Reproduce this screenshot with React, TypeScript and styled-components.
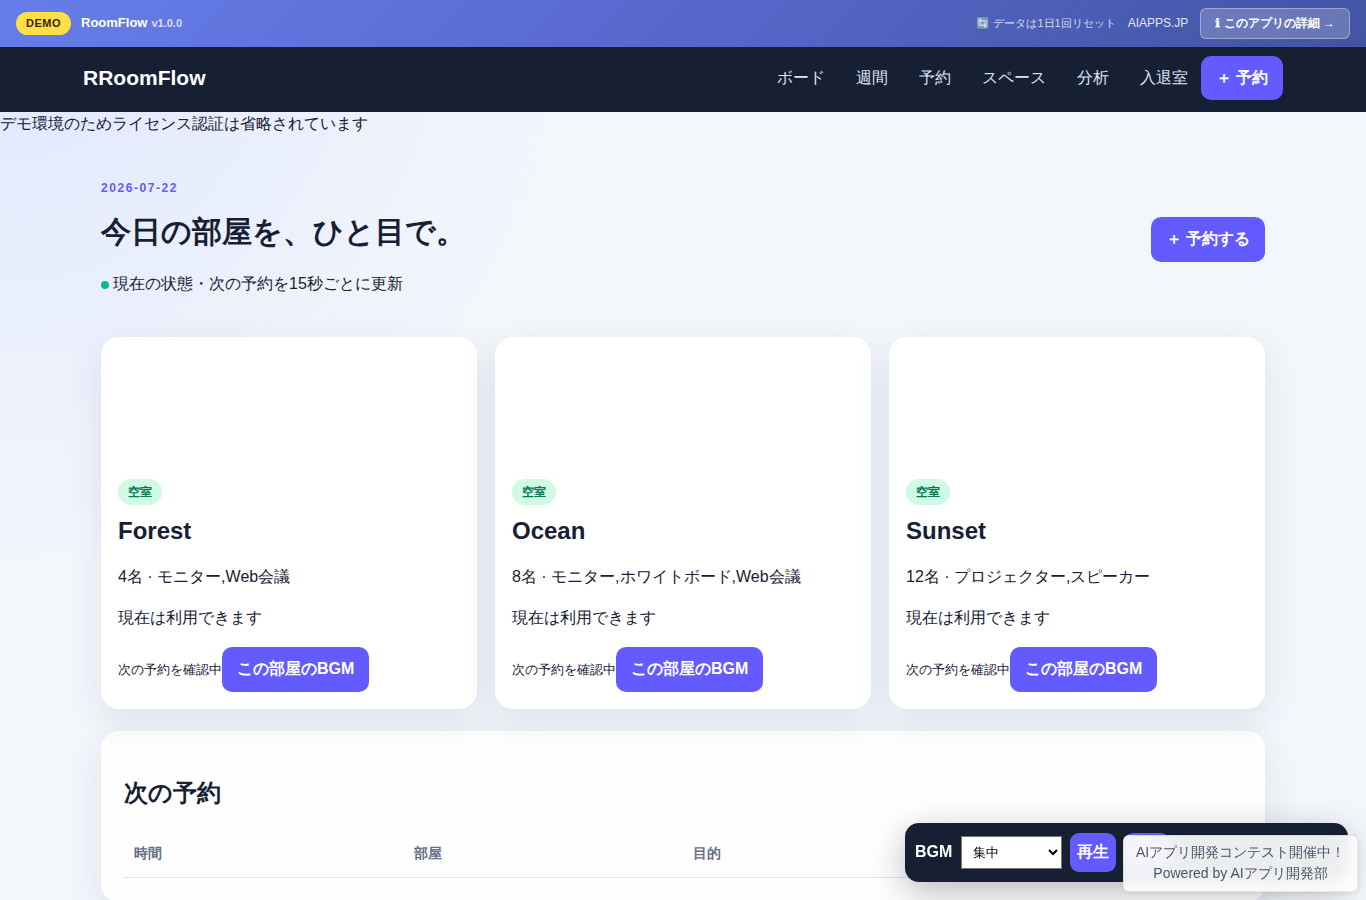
import React from "react";
import styled, { createGlobalStyle } from "styled-components";

const GlobalStyle = createGlobalStyle`
  * { box-sizing: border-box; }
  html { height: 100%; overflow: hidden; }
  body {
    margin: 0;
    height: 900px;
    overflow: hidden;
    color: #172033;
    font-family: "Liberation Sans", sans-serif;
    font-size: 16px;
    line-height: 24px;
    background: radial-gradient(circle at top left, #e0e7ff, transparent 35%) #f3f6fb;
  }
  button, select { font-family: inherit; }
`;

const DemoBar = styled.div`
  display: flex;
  align-items: center;
  justify-content: space-between;
  height: 47px;
  padding: 0 16px;
  color: #fff;
  background: linear-gradient(135deg, #667eea 0%, #5768cc 50%, #4254a2 100%);
`;

const BarGroup = styled.div<{ $gap: number }>`
  display: flex;
  align-items: center;
  gap: ${(p) => p.$gap}px;
`;

const DemoTag = styled.span`
  height: 23px;
  padding: 0 10px;
  border-radius: 20px;
  background: #fde047;
  color: #422006;
  font-size: 11px;
  line-height: 23px;
  font-weight: 700;
  letter-spacing: 0.5px;
`;

const AppName = styled.strong`
  font-size: 13px;
  line-height: 20px;
  padding-bottom: 1px;
`;

const Version = styled.span`
  font-size: 11px;
  font-weight: 700;
  opacity: 0.75;
  padding-bottom: 2px;
`;

const ResetNote = styled.span`
  font-size: 11px;
  opacity: 0.75;
  padding-bottom: 2px;
`;

const SiteLink = styled.a`
  font-size: 12px;
  opacity: 0.85;
  padding-bottom: 1px;
`;

const DetailLink = styled.a`
  height: 31px;
  padding: 0 14px;
  border: 1px solid rgba(255, 255, 255, 0.35);
  border-radius: 6px;
  background: rgba(255, 255, 255, 0.2);
  font-size: 12px;
  line-height: 28px;
  font-weight: 700;
`;

const InfoGlyph = styled.span`
  padding-right: 0.4px;
  font-family: "DejaVu Sans", sans-serif;
  -webkit-text-stroke: 0.5px currentColor;
`;

const Header = styled.header`
  display: flex;
  align-items: center;
  justify-content: space-between;
  height: 65px;
  padding: 0 83px;
  background: #172033;
`;

const Brand = styled.strong`
  color: #fff;
  font-size: 21px;
  padding-bottom: 3px;
`;

const Nav = styled.nav`
  display: flex;
  align-items: center;
  gap: 31px;
  padding-bottom: 3px;
`;

const NavLink = styled.a`
  color: #dbe4f5;
`;

const Button = styled.button<{ $height?: number; $compact?: boolean }>`
  flex: none;
  height: ${(p) => p.$height ?? 45}px;
  padding: 0 ${(p) => (p.$compact ? 7 : 15)}px 2px;
  border: 0;
  border-radius: ${(p) => (p.$compact ? 9 : 10)}px;
  background: #635bff;
  color: #fff;
  font-size: 16px;
  line-height: 24px;
  font-weight: 700;
  white-space: nowrap;
`;

const HeaderButton = styled(Button)`
  margin-left: -18px;
  padding-bottom: 0;
`;

const Notice = styled.div`
  height: 24px;
`;

const Main = styled.main`
  width: 1200px;
  margin: 0 auto;
  padding: 40px 18px 0;
`;

const Hero = styled.section`
  display: flex;
  align-items: flex-start;
  justify-content: space-between;
  height: 161px;
`;

const DateLabel = styled.div`
  color: #635bff;
  font-size: 12px;
  line-height: 24px;
  font-weight: 700;
  letter-spacing: 1.56px;
`;

const Title = styled.h1`
  margin: 10px 0 0;
  font-size: 30px;
  line-height: 44px;
  font-weight: 700;
`;

const LiveLine = styled.p`
  display: flex;
  align-items: center;
  gap: 4px;
  margin: 18px 0 0;
`;

const Dot = styled.i`
  width: 8px;
  height: 8px;
  margin-top: 2px;
  border-radius: 50%;
  background: #10b981;
`;

const HeroAction = styled.div`
  padding-top: 41px;
`;

const Rooms = styled.section`
  display: grid;
  grid-template-columns: repeat(3, 1fr);
  gap: 18px;
`;

const Card = styled.article`
  height: 372px;
  padding: 142px 17px 0;
  border-radius: 18px;
  background: #fff;
  box-shadow: 0 12px 35px rgba(37, 47, 96, 0.1);
`;

const Status = styled.span`
  display: block;
  width: 44px;
  height: 26px;
  border-radius: 20px;
  background: #d1fae5;
  color: #047857;
  font-size: 12px;
  line-height: 27px;
  font-weight: 700;
  text-align: center;
`;

const RoomName = styled.h2`
  margin: 10px 0 0;
  font-size: 24px;
  line-height: 32px;
`;

const RoomText = styled.p<{ $top: number }>`
  margin: ${(p) => p.$top}px 0 0;
`;

const CardFooter = styled.div`
  display: flex;
  align-items: center;
  margin-top: 17px;
`;

const NextNote = styled.small`
  font-size: 13px;
`;

const Panel = styled.section`
  height: 171px;
  margin-top: 22px;
  padding: 44px 23px 0;
  border-radius: 18px;
  background: rgba(255, 255, 255, 0.9);
  box-shadow: 0 12px 35px rgba(37, 47, 96, 0.1);
`;

const PanelTitle = styled.h2`
  margin: 0;
  font-size: 24px;
  line-height: 36px;
`;

const TableHead = styled.div`
  display: grid;
  grid-template-columns: repeat(4, 1fr);
  height: 49px;
  margin-top: 18px;
  border-bottom: 1px solid #dde2ee;
  color: #667085;
  font-size: 14px;
  line-height: 48px;
  font-weight: 700;
`;

const HeadCell = styled.span`
  padding-left: 10px;
`;

const Player = styled.aside`
  position: fixed;
  right: 18px;
  bottom: 18px;
  display: flex;
  align-items: center;
  gap: 8px;
  width: 443px;
  height: 59px;
  padding: 0 10px;
  border-radius: 14px;
  background: #172033;
  color: #fff;
  box-shadow: 0 10px 35px rgba(0, 0, 0, 0.27);
`;

const PlayerLabel = styled.strong`
  padding-bottom: 2px;
  margin-right: 1px;
`;

const Track = styled.select`
  width: 101px;
  height: 33px;
  padding: 0 8px 0 7px;
  border: 1px solid #767676;
  border-radius: 0;
  background: #fff;
  color: #000;
  font-size: 13.333px;
`;

const Promo = styled.div`
  position: fixed;
  right: 8px;
  bottom: 8px;
  width: 235px;
  height: 57px;
  padding: 6px 0 0;
  border: 1px solid rgba(0, 0, 0, 0.08);
  border-radius: 6px;
  background: rgba(255, 255, 255, 0.92);
  backdrop-filter: blur(8px);
  box-shadow: 0 1px 4px rgba(0, 0, 0, 0.08);
  color: #4a5568;
  font-size: 14px;
  line-height: 21px;
  text-align: center;
  white-space: nowrap;
`;

const links = ["ボード", "週間", "予約", "スペース", "分析", "入退室"];

const rooms = [
  { name: "Forest", info: "4名 · モニター,Web会議" },
  { name: "Ocean", info: "8名 · モニター,ホワイトボード,Web会議" },
  { name: "Sunset", info: "12名 · プロジェクター,スピーカー" },
];

const columns = ["時間", "部屋", "目的"];

export default function App() {
  return (
    <>
      <GlobalStyle />
      <DemoBar>
        <BarGroup $gap={10}>
          <DemoTag>DEMO</DemoTag>
          <BarGroup $gap={4}>
            <AppName>RoomFlow</AppName>
            <Version>v1.0.0</Version>
          </BarGroup>
        </BarGroup>
        <BarGroup $gap={12}>
          <ResetNote>🔄 データは1日1回リセット</ResetNote>
          <SiteLink>AIAPPS.JP</SiteLink>
          <DetailLink>
            <InfoGlyph>ℹ</InfoGlyph> このアプリの詳細 →
          </DetailLink>
        </BarGroup>
      </DemoBar>
      <Header>
        <Brand>RRoomFlow</Brand>
        <Nav>
          {links.map((label) => (
            <NavLink key={label}>{label}</NavLink>
          ))}
          <HeaderButton $height={44}>＋ 予約</HeaderButton>
        </Nav>
      </Header>
      <Notice>デモ環境のためライセンス認証は省略されています</Notice>
      <Main>
        <Hero>
          <div>
            <DateLabel>2026-07-22</DateLabel>
            <Title>今日の部屋を、ひと目で。</Title>
            <LiveLine>
              <Dot />
              現在の状態・次の予約を15秒ごとに更新
            </LiveLine>
          </div>
          <HeroAction>
            <Button>＋ 予約する</Button>
          </HeroAction>
        </Hero>
        <Rooms>
          {rooms.map((room) => (
            <Card key={room.name}>
              <Status>空室</Status>
              <RoomName>{room.name}</RoomName>
              <RoomText $top={18}>{room.info}</RoomText>
              <RoomText $top={17}>現在は利用できます</RoomText>
              <CardFooter>
                <NextNote>次の予約を確認中</NextNote>
                <Button>この部屋のBGM</Button>
              </CardFooter>
            </Card>
          ))}
        </Rooms>
        <Panel>
          <PanelTitle>次の予約</PanelTitle>
          <TableHead>
            {columns.map((label) => (
              <HeadCell key={label}>{label}</HeadCell>
            ))}
          </TableHead>
        </Panel>
      </Main>
      <Player>
        <PlayerLabel>BGM</PlayerLabel>
        <Track defaultValue="集中">
          <option>集中</option>
        </Track>
        <Button $height={39} $compact>再生</Button>
        <Button $height={39} $compact>停止</Button>
      </Player>
      <Promo>
        AIアプリ開発コンテスト開催中！
        <br />
        Powered by AIアプリ開発部
      </Promo>
    </>
  );
}
